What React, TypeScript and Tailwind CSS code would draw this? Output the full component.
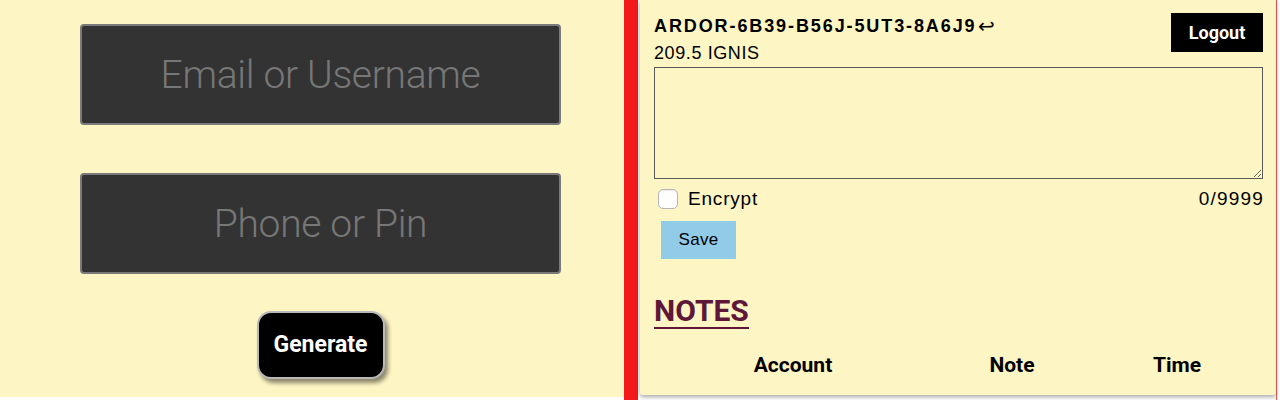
import { useState } from "react";

const NotesPanel = () => {
    const [note, setNote] = useState("");
    return (
        <div className="w-[636px] h-[395px] bg-[#fdf5c3] shadow-[0_2px_4px_rgba(0,0,0,0.35)] rounded-b-[3px] pl-[14px] pr-[13px] pt-[13px] font-['Liberation_Sans',Arial,sans-serif] text-black">
            <div className="flex justify-between items-start">
                <div>
                    <div className="flex items-center text-[18px] font-bold leading-[22px] tracking-[1.9px] mt-[2px]">
                        ARDOR-6B39-B56J-5UT3-8A6J9
                        <span className="ml-[1px] font-normal text-[20px] leading-none">↩</span>
                    </div>
                    <div className="text-[18px] leading-[22px] tracking-[0.6px] mt-[5px]">209.5 IGNIS</div>
                </div>
                <button className="w-[92px] h-[39px] bg-black text-white text-[18px] font-bold font-['Roboto',sans-serif]">Logout</button>
            </div>
            <textarea
                value={note}
                onChange={(e) => setNote(e.target.value)}
                className="block w-[609px] h-[112px] mt-[3px] border border-[#5a5a5a] bg-transparent outline-none resize-y p-1"
            />
            <div className="flex justify-between items-center mt-[8px] leading-[24px]">
                <label className="flex items-center gap-[10px] pl-[4px] text-[19px] tracking-[0.8px]">
                    <input type="checkbox" className="appearance-none w-[20px] h-[20px] rounded-[5px] border border-[#b5b5b5] bg-white shadow-[inset_0_1px_1px_rgba(0,0,0,0.08)]" />
                    Encrypt
                </label>
                <span className="text-[19px] tracking-[1.2px] -mr-[1px]">{note.length}/9999</span>
            </div>
            <button className="block mt-[10px] ml-[7px] w-[75px] h-[38px] bg-[#92cbe8] text-[17px] tracking-[0.3px]">Save</button>
            <div className="mt-[36px]">
                <h2 className="inline-block text-[30px] leading-[32px] font-bold text-[#5e1739] border-b-2 border-[#5e1739] font-['Roboto',sans-serif]">NOTES</h2>
            </div>
            <div className="grid grid-cols-[278px_160px_170px] mt-[24px] text-[21px] leading-[24px] font-bold font-['Roboto',sans-serif] text-center">
                <div>Account</div>
                <div>Note</div>
                <div>Time</div>
            </div>
        </div>
    );
};

const App = () => {
    return (
        <div className="w-[1280px] h-[400px] bg-white flex overflow-hidden">
            <div className="w-[624px] h-[397px] bg-[#fdf5c3] pl-[80px] pt-[24px] font-['Roboto',sans-serif]">
                <input
                    placeholder="Email or Username"
                    className="block w-[481px] h-[101px] bg-[#333333] border-2 border-[#7a7a7a] rounded-[4px] text-center text-[39px] font-light tracking-[-0.3px] text-[#777] placeholder:text-[#777] outline-none"
                />
                <input
                    placeholder="Phone or Pin"
                    className="block w-[481px] h-[101px] mt-[48px] bg-[#333333] border-2 border-[#7a7a7a] rounded-[4px] text-center text-[39px] font-light tracking-[-0.3px] text-[#777] placeholder:text-[#777] outline-none"
                />
                <div className="w-[481px] flex justify-center mt-[37px]">
                    <button className="w-[128px] h-[68px] bg-black text-white text-[23px] font-bold rounded-[14px] border-2 border-[#b9b9b9] shadow-[3px_4px_4px_rgba(0,0,0,0.45)]">
                        Generate
                    </button>
                </div>
            </div>
            <div className="w-[14px] h-[400px] bg-[#f21a1a]" />
            <div className="w-[2px]" />
            <NotesPanel />
            <div className="w-[1px] bg-[#e25050]" />
        </div>
    );
};

export default App;
